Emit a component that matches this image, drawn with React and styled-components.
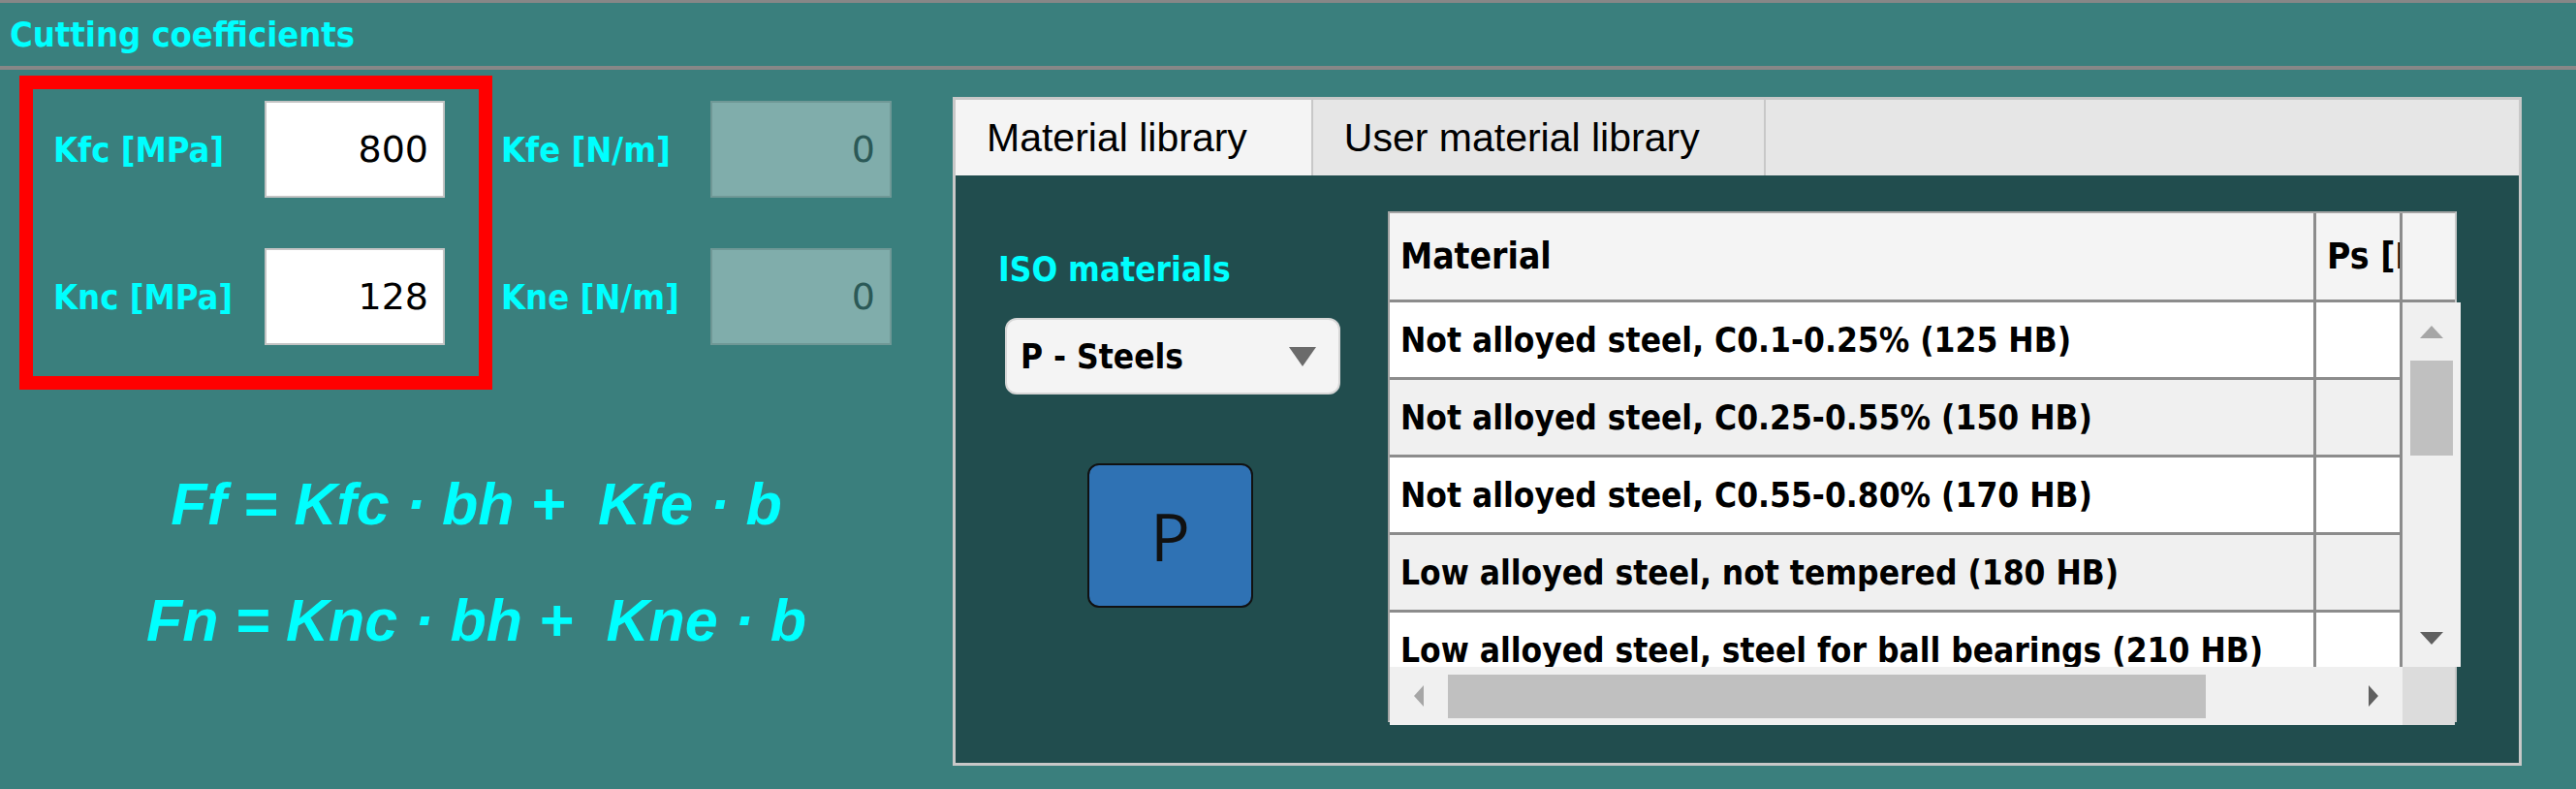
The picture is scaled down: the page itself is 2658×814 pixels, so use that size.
import React from "react";
import styled, { createGlobalStyle, css } from "styled-components";

const GlobalStyle = createGlobalStyle`
  html, body {
    margin: 0;
    padding: 0;
  }
  body {
    background: #3a7f7d;
    overflow: hidden;
  }
`;

// tahoma-like bold used all over the form
const boldText = css`
  font-family: "DejaVu Sans", "Liberation Sans", sans-serif;
  font-weight: 700;
  font-stretch: condensed;
`;

const Screen = styled.div`
  width: 2658px;
  height: 814px;
  background: #3a7f7d;
  display: flex;
  flex-direction: column;
`;

const TitleBar = styled.div`
  height: 65px;
  border-top: 3px solid #878787;
  border-bottom: 4px solid #878787;
  display: flex;
  align-items: center;
  padding-left: 10px;
  ${boldText};
  font-size: 36px;
  color: #00ffff;
`;

const Main = styled.div`
  flex: 1;
  display: flex;
`;

const LeftCol = styled.div`
  width: 983px;
  flex: none;
`;

const CoeffRow = styled.div`
  display: flex;
  align-items: flex-start;
  margin: 6px 0 0 20px;
`;

const RedFrame = styled.div`
  border: 14px solid #ff0000;
  display: grid;
  grid-template-columns: 218px 186px;
  row-gap: 52px;
  align-items: center;
  padding: 12px 35px 32px 21px;
`;

const ValueGroup = styled.div`
  display: grid;
  grid-template-columns: 216px 187px;
  row-gap: 52px;
  align-items: center;
  margin: 26px 0 0 9px;
`;

const FieldLabel = styled.div`
  ${boldText};
  font-size: 36px;
  color: #00ffff;
  white-space: nowrap;
`;

const ValueBox = styled.div`
  height: 100px;
  box-sizing: border-box;
  border: 2px solid ${(p) => (p.$disabled ? "#6f9896" : "#c4c4c4")};
  background: ${(p) => (p.$disabled ? "#80adab" : "#ffffff")};
  color: ${(p) => (p.$disabled ? "#2b5957" : "#000000")};
  font-family: "DejaVu Sans", sans-serif;
  font-size: 38px;
  display: flex;
  align-items: center;
  justify-content: flex-end;
  padding-right: 15px;
`;

const Formulas = styled.div`
  margin-top: 58px;
  text-align: center;
  font-family: "Liberation Sans", Arial, sans-serif;
  font-weight: 700;
  font-style: italic;
  font-size: 61px;
  line-height: 120px;
  color: #00ffff;
  white-space: pre;
`;

const TabPanel = styled.div`
  margin-top: 28px;
  width: 1619px;
  height: 690px;
  box-sizing: border-box;
  border: 3px solid #c8c8c8;
  display: flex;
  flex-direction: column;
`;

const TabStrip = styled.div`
  height: 78px;
  flex: none;
  display: flex;
  background: #e6e6e6;
`;

const Tab = styled.div`
  display: flex;
  align-items: center;
  padding: 0 66px 0 32px;
  border-right: 2px solid #c8c8c8;
  background: ${(p) => (p.$active ? "#f4f4f4" : "#e6e6e6")};
  font-family: "Liberation Sans", Arial, sans-serif;
  font-size: 41px;
  color: #000;
  white-space: nowrap;
`;

const TabBody = styled.div`
  flex: 1;
  display: flex;
  align-items: flex-start;
  padding-top: 37px;
  background: #214d4e;
`;

const PickerPane = styled.div`
  width: 446px;
  flex: none;
  box-sizing: border-box;
  padding: 38px 0 0 44px;
  display: flex;
  flex-direction: column;
  align-items: flex-start;
`;

const IsoLabel = styled.div`
  ${boldText};
  font-size: 35px;
  line-height: 44px;
  color: #00ffff;
`;

const Dropdown = styled.div`
  margin: 28px 0 0 7px;
  width: 346px;
  height: 79px;
  box-sizing: border-box;
  background: #f4f4f4;
  border: 2px solid #d6d6d6;
  border-radius: 12px;
  display: flex;
  align-items: center;
  justify-content: space-between;
  padding: 0 23px 0 14px;
  ${boldText};
  font-size: 35px;
  color: #000;
`;

const DropArrow = styled.span`
  width: 0;
  height: 0;
  border-left: 14px solid transparent;
  border-right: 14px solid transparent;
  border-top: 20px solid #6b6b6b;
`;

const GroupButton = styled.div`
  margin: 71px 0 0 92px;
  width: 171px;
  height: 149px;
  box-sizing: border-box;
  background: #2f72b4;
  border: 2px solid #111;
  border-radius: 12px;
  display: flex;
  align-items: center;
  justify-content: center;
  font-family: "Open Sans", "Liberation Sans", sans-serif;
  font-size: 68px;
  color: #111;
`;

const Grid = styled.div`
  width: 1103px;
  height: 527px;
  flex: none;
  box-sizing: border-box;
  border: 2px solid #c8c8c8;
  border-top-color: #a4a4a4;
  border-left-color: #a4a4a4;
  background: #fff;
  display: flex;
  flex-direction: column;
  ${boldText};
  color: #000;
`;

const HeadRow = styled.div`
  height: 92px;
  flex: none;
  box-sizing: border-box;
  display: grid;
  grid-template-columns: 956px 89px 1fr;
  background: #f4f4f4;
  border-bottom: 3px solid #8c8c8c;
`;

const HeadCell = styled.div`
  display: flex;
  align-items: center;
  padding-left: 11px;
  overflow: hidden;
  white-space: nowrap;
  font-size: 37px;
  border-right: ${(p) => (p.$last ? "none" : "3px solid #8c8c8c")};
`;

const GridBody = styled.div`
  height: 376px;
  flex: none;
  display: flex;
`;

const Rows = styled.div`
  width: 1045px;
  flex: none;
  overflow: hidden;
`;

const Row = styled.div`
  height: 80px;
  box-sizing: border-box;
  display: grid;
  grid-template-columns: 956px 89px;
  border-bottom: 3px solid #8c8c8c;
  background: ${(p) => (p.$odd ? "#f0f0f0" : "#ffffff")};
`;

const Cell = styled.div`
  display: flex;
  align-items: center;
  padding-left: 11px;
  overflow: hidden;
  white-space: nowrap;
  font-size: 35px;
  border-right: 3px solid #8c8c8c;
`;

const VScroll = styled.div`
  flex: 1;
  background: #f0f0f0;
  display: flex;
  flex-direction: column;
  align-items: center;
`;

const ArrowZone = styled.div`
  width: 60px;
  height: 60px;
  flex: none;
  display: flex;
  align-items: center;
  justify-content: center;
`;

const Spacer = styled.div`
  flex: 1;
`;

const VThumb = styled.div`
  width: 44px;
  height: 98px;
  background: #c0c0c0;
`;

const HScrollRow = styled.div`
  flex: 1;
  display: flex;
`;

const HTrack = styled.div`
  width: 1045px;
  flex: none;
  display: flex;
  align-items: center;
  background: #f0f0f0;
`;

const HThumb = styled.div`
  width: 782px;
  height: 45px;
  background: #c0c0c0;
`;

const Corner = styled.div`
  flex: 1;
  background: #dcdcdc;
`;

const Tri = styled.span`
  width: 0;
  height: 0;
  ${(p) =>
    p.$dir === "up" &&
    css`
      border-left: 12px solid transparent;
      border-right: 12px solid transparent;
      border-bottom: 13px solid ${p.$dim ? "#a6a6a6" : "#606060"};
    `}
  ${(p) =>
    p.$dir === "down" &&
    css`
      border-left: 12px solid transparent;
      border-right: 12px solid transparent;
      border-top: 13px solid ${p.$dim ? "#a6a6a6" : "#606060"};
    `}
  ${(p) =>
    p.$dir === "left" &&
    css`
      border-top: 11px solid transparent;
      border-bottom: 11px solid transparent;
      border-right: 10px solid ${p.$dim ? "#a6a6a6" : "#606060"};
    `}
  ${(p) =>
    p.$dir === "right" &&
    css`
      border-top: 11px solid transparent;
      border-bottom: 11px solid transparent;
      border-left: 10px solid ${p.$dim ? "#a6a6a6" : "#606060"};
    `}
`;

const materials = [
  "Not alloyed steel, C0.1-0.25% (125 HB)",
  "Not alloyed steel, C0.25-0.55% (150 HB)",
  "Not alloyed steel, C0.55-0.80% (170 HB)",
  "Low alloyed steel, not tempered (180 HB)",
  "Low alloyed steel, steel for ball bearings (210 HB)",
];

export default function App() {
  return (
    <Screen>
      <GlobalStyle />
      <TitleBar>Cutting coefficients</TitleBar>
      <Main>
        <LeftCol>
          <CoeffRow>
            <RedFrame>
              <FieldLabel>Kfc [MPa]</FieldLabel>
              <ValueBox>800</ValueBox>
              <FieldLabel>Knc [MPa]</FieldLabel>
              <ValueBox>128</ValueBox>
            </RedFrame>
            <ValueGroup>
              <FieldLabel>Kfe [N/m]</FieldLabel>
              <ValueBox $disabled>0</ValueBox>
              <FieldLabel>Kne [N/m]</FieldLabel>
              <ValueBox $disabled>0</ValueBox>
            </ValueGroup>
          </CoeffRow>
          <Formulas>
            <div>{"Ff = Kfc \u00b7 bh +  Kfe \u00b7 b"}</div>
            <div>{"Fn = Knc \u00b7 bh +  Kne \u00b7 b"}</div>
          </Formulas>
        </LeftCol>

        <TabPanel>
          <TabStrip>
            <Tab $active>Material library</Tab>
            <Tab>User material library</Tab>
          </TabStrip>
          <TabBody>
            <PickerPane>
              <IsoLabel>ISO materials</IsoLabel>
              <Dropdown>
                <span>P - Steels</span>
                <DropArrow />
              </Dropdown>
              <GroupButton>P</GroupButton>
            </PickerPane>

            <Grid>
              <HeadRow>
                <HeadCell>Material</HeadCell>
                <HeadCell>Ps [MPa]</HeadCell>
                <HeadCell $last />
              </HeadRow>
              <GridBody>
                <Rows>
                  {materials.map((m, i) => (
                    <Row key={m} $odd={i % 2 === 1}>
                      <Cell>{m}</Cell>
                      <Cell />
                    </Row>
                  ))}
                </Rows>
                <VScroll>
                  <ArrowZone>
                    <Tri $dir="up" $dim />
                  </ArrowZone>
                  <VThumb />
                  <Spacer />
                  <ArrowZone>
                    <Tri $dir="down" />
                  </ArrowZone>
                </VScroll>
              </GridBody>
              <HScrollRow>
                <HTrack>
                  <ArrowZone>
                    <Tri $dir="left" $dim />
                  </ArrowZone>
                  <HThumb />
                  <Spacer />
                  <ArrowZone>
                    <Tri $dir="right" />
                  </ArrowZone>
                </HTrack>
                <Corner />
              </HScrollRow>
            </Grid>
          </TabBody>
        </TabPanel>
      </Main>
    </Screen>
  );
}
